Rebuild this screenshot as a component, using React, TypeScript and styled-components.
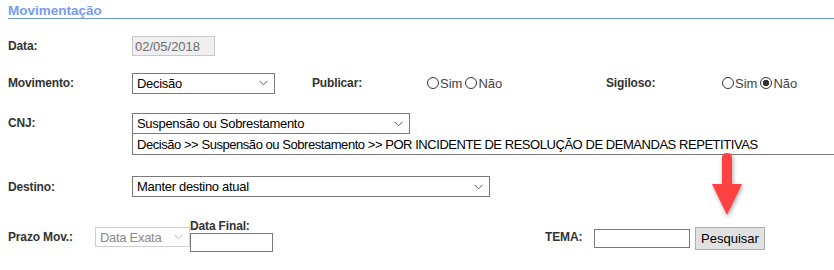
import React from "react";
import styled, { createGlobalStyle } from "styled-components";

const GlobalStyle = createGlobalStyle`
  body {
    margin: 0;
    background: #ffffff;
    font-family: "Liberation Sans", Arial, sans-serif;
  }
`;

const Page = styled.div`
  position: relative;
  width: 834px;
  height: 270px;
  overflow: hidden;
  padding-left: 8px;
  box-sizing: border-box;
`;

const SectionTitle = styled.h2`
  margin: 0;
  padding-top: 3px;
  height: 15px;
  font-size: 13.5px;
  font-weight: bold;
  color: #789cf2;
  border-bottom: 1px solid #6a9bd2;
  line-height: 15px;
`;

const Row = styled.div<{ $top: number; $height: number }>`
  display: flex;
  align-items: center;
  margin-top: ${(p) => p.$top}px;
  height: ${(p) => p.$height}px;
`;

const StackRow = styled.div<{ $top: number }>`
  display: flex;
  align-items: flex-start;
  margin-top: ${(p) => p.$top}px;
`;

const Label = styled.div<{ $width: number }>`
  flex: none;
  width: ${(p) => p.$width}px;
  font-size: 12px;
  font-weight: bold;
  color: #333;
  letter-spacing: -0.15px;
`;

const Cell = styled.div<{ $width?: number }>`
  flex: none;
  width: ${(p) => (p.$width ? `${p.$width}px` : "auto")};
  display: flex;
  align-items: center;
`;

const Select = styled.div<{ $width: number; $disabled?: boolean }>`
  box-sizing: border-box;
  width: ${(p) => p.$width}px;
  height: ${(p) => (p.$disabled ? 20 : 21)}px;
  border: 1px solid ${(p) => (p.$disabled ? "#d0d0d0" : "#7a7a7a")};
  display: flex;
  align-items: center;
  justify-content: space-between;
  padding: 0 6px 0 4px;
  font-size: 13px;
  letter-spacing: -0.3px;
  color: ${(p) => (p.$disabled ? "#8a8a8a" : "#000")};
  background: #fff;
  white-space: nowrap;
`;

const Chevron = ({ color }: { color: string }) => (
  <svg width="9" height="6" viewBox="0 0 9 6">
    <path d="M0.5 0.8 L4.5 4.8 L8.5 0.8" fill="none" stroke={color} strokeWidth="1" />
  </svg>
);

const TextBox = styled.div<{ $width: number; $height: number; $readonly?: boolean }>`
  box-sizing: border-box;
  width: ${(p) => p.$width}px;
  height: ${(p) => p.$height}px;
  border: 1px solid ${(p) => (p.$readonly ? "#c9c9c9" : "#7a7a7a")};
  background: ${(p) => (p.$readonly ? "#efefef" : "#fff")};
  color: #6d6d6d;
  font-size: 13px;
  display: flex;
  align-items: center;
  padding-left: 2px;
`;

const CnjBlock = styled.div`
  display: flex;
  flex-direction: column;
`;

const PathBox = styled.div`
  box-sizing: border-box;
  width: 720px;
  height: 21px;
  border: 1px solid #7a7a7a;
  border-top: none;
  padding-left: 4px;
  font-size: 13px;
  letter-spacing: -0.45px;
  display: flex;
  align-items: center;
  white-space: nowrap;
`;

const RadioGroup = styled.div`
  display: flex;
  align-items: center;
  font-family: Arial, "Liberation Sans", sans-serif;
  font-size: 13px;
  color: #444;
`;

const RadioDot = styled.span<{ $checked?: boolean }>`
  display: inline-block;
  box-sizing: border-box;
  width: 12px;
  height: 12px;
  border: 1px solid #333;
  border-radius: 50%;
  margin-right: 1px;
  background: ${(p) => (p.$checked ? "radial-gradient(circle, #333 0 3px, #fff 3.5px)" : "#fff")};
`;

const RadioText = styled.span`
  margin-right: 3px;
`;

const FinalDate = styled.div`
  display: flex;
  flex-direction: column;
`;

const SmallLabel = styled.div`
  font-size: 12px;
  font-weight: bold;
  color: #333;
  height: 14px;
  line-height: 14px;
  letter-spacing: -0.15px;
`;

const Spacer = styled.div<{ $width: number }>`
  flex: none;
  width: ${(p) => p.$width}px;
`;

const Button = styled.button`
  box-sizing: border-box;
  height: 23px;
  width: 70px;
  margin-left: 5px;
  border: 1px solid #adadad;
  background: #e1e1e1;
  font-family: "Liberation Sans", Arial, sans-serif;
  font-size: 13px;
  color: #000;
  padding: 0;
`;

const Arrow = styled.svg`
  position: absolute;
  left: 708px;
  top: 150px;
  filter: drop-shadow(1px 2px 2px rgba(0, 0, 0, 0.35));
`;

const Radio = ({ checked }: { checked?: string }) => (
  <RadioGroup>
    <RadioDot $checked={checked === "Sim"} />
    <RadioText>Sim</RadioText>
    <RadioDot $checked={checked === "Não"} />
    <RadioText>Não</RadioText>
  </RadioGroup>
);

export default function App() {
  return (
    <Page>
      <GlobalStyle />
      <SectionTitle>Movimentação</SectionTitle>

      <Row $top={17} $height={20}>
        <Label $width={124}>Data:</Label>
        <TextBox $width={83} $height={20} $readonly>
          02/05/2018
        </TextBox>
      </Row>

      <Row $top={16} $height={22}>
        <Label $width={124}>Movimento:</Label>
        <Cell $width={180}>
          <Select $width={143}>
            Decisão
            <Chevron color="#555" />
          </Select>
        </Cell>
        <Label $width={115}>Publicar:</Label>
        <Cell $width={179}>
          <Radio />
        </Cell>
        <Label $width={116}>Sigiloso:</Label>
        <Cell>
          <Radio checked="Não" />
        </Cell>
      </Row>

      <StackRow $top={19}>
        <Label $width={124} style={{ lineHeight: "20px" }}>
          CNJ:
        </Label>
        <CnjBlock>
          <Select $width={278}>
            Suspensão ou Sobrestamento
            <Chevron color="#555" />
          </Select>
          <PathBox>
            Decisão &gt;&gt; Suspensão ou Sobrestamento &gt;&gt; POR INCIDENTE DE RESOLUÇÃO DE DEMANDAS REPETITIVAS
          </PathBox>
        </CnjBlock>
      </StackRow>

      <Row $top={21} $height={21}>
        <Label $width={124}>Destino:</Label>
        <Select $width={358}>
          Manter destino atual
          <Chevron color="#555" />
        </Select>
      </Row>

      <StackRow $top={22}>
        <Label $width={87} style={{ marginTop: 11 }}>
          Prazo Mov.:
        </Label>
        <Cell style={{ marginTop: 8 }}>
          <Select $width={95} $disabled>
            Data Exata
            <Chevron color="#b5b5b5" />
          </Select>
        </Cell>
        <FinalDate>
          <SmallLabel>Data Final:</SmallLabel>
          <TextBox $width={83} $height={19} />
        </FinalDate>
        <Spacer $width={272} />
        <Label $width={49} style={{ marginTop: 11 }}>
          TEMA:
        </Label>
        <Cell style={{ marginTop: 8 }}>
          <TextBox $width={96} $height={19} />
          <Button>Pesquisar</Button>
        </Cell>
      </StackRow>

      <Arrow width="44" height="70" viewBox="0 0 44 70">
        <path d="M14 8 Q14 3 19 3 Q24 3 24 8 L24 34 L34 34 L19 65 L4 34 L14 34 Z" fill="#ff4141" />
      </Arrow>
    </Page>
  );
}
